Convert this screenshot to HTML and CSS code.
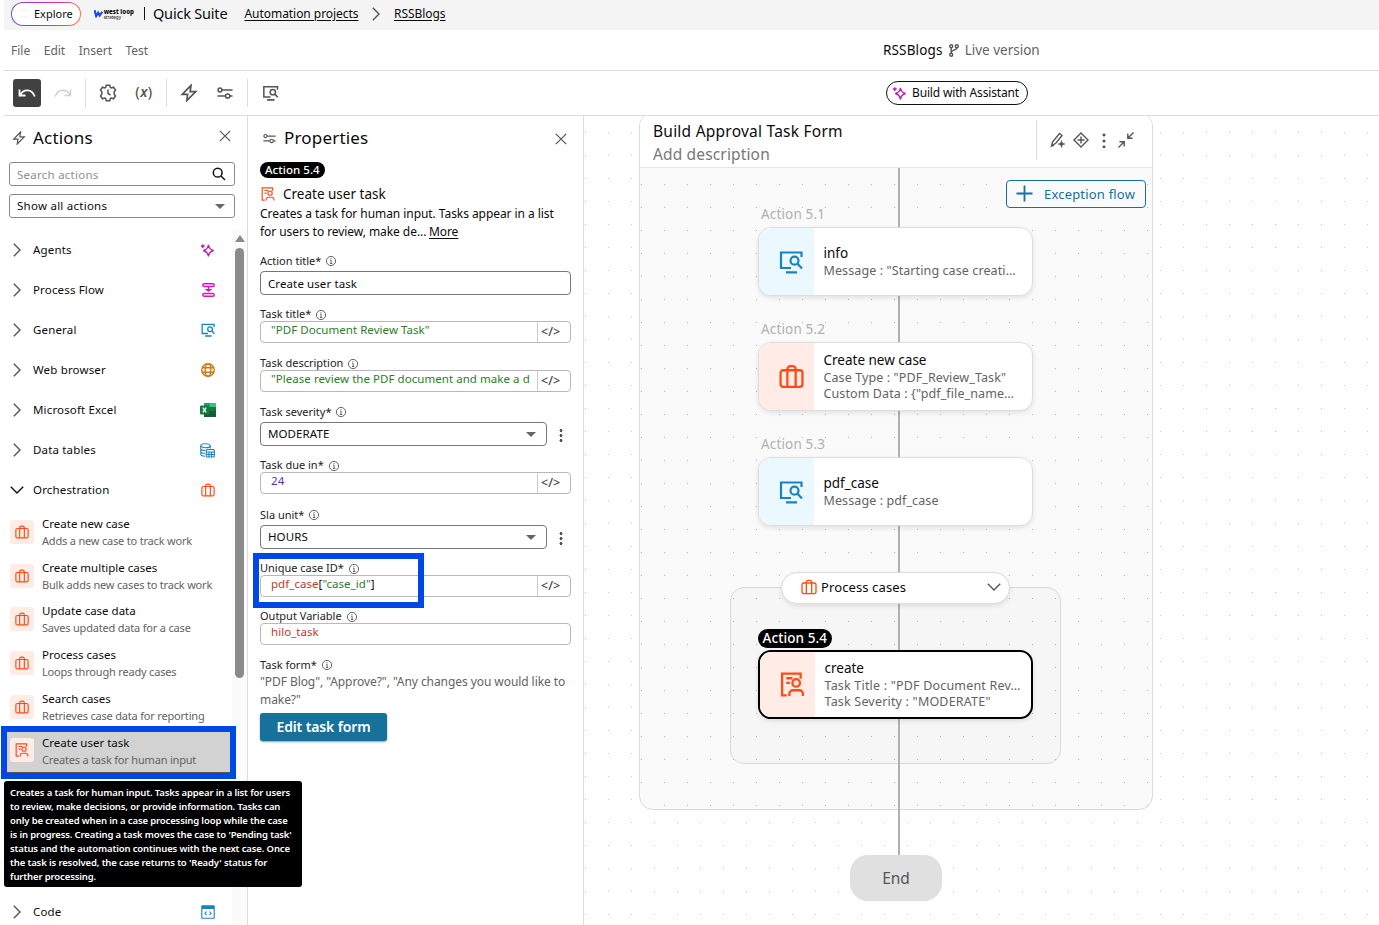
FILE: index.html
```html
<!DOCTYPE html>
<html lang="en">
<head>
<meta charset="UTF-8">
<title>RSSBlogs – Quick Suite</title>
<meta name="viewport" content="width=device-width,initial-scale=1">
<link rel="stylesheet" href="styles.css">
</head>
<body>
<svg class="sprite" width="0" height="0" aria-hidden="true">
  <defs>
    <linearGradient id="magic" x1="1" y1="0" x2="0" y2="1"><stop offset="0" stop-color="#f0109a"/><stop offset=".5" stop-color="#c414b8"/><stop offset="1" stop-color="#5a1a9c"/></linearGradient>
  </defs>
  <symbol id="i-monitor" viewBox="0 0 24 24"><path d="M22.500 7V2.500H2v15.500h10M7 22.300h11"/><circle cx="15.500" cy="10.700" r="4"/><path d="M18.500 13.700l4.500 4.800"/></symbol>
  <symbol id="i-case" viewBox="0 0 24 24"><rect x="1.500" y="6" width="21" height="16" rx="2.500"/><path d="M8 22V5a3 3 0 0 1 3-3h2a3 3 0 0 1 3 3v17"/></symbol>
  <symbol id="i-task" viewBox="0 0 24 24"><path d="M19.800 6.500V1.500H2V22.500H6.500M6 6h6M6 10.500h3.500"/><circle cx="15.500" cy="10.500" r="3.600"/><path d="M9 23v-2a3.500 3.500 0 0 1 3.500-3.500h6a3.500 3.500 0 0 1 3.500 3.500v2"/></symbol>
  <symbol id="i-bolt" viewBox="0 0 16 16"><path d="M9.800 1.200L2 9.200h4.800L6 14.800 14 6.800H9z"/></symbol>
  <symbol id="i-sliders" viewBox="0 0 16 16"><circle cx="3" cy="5" r="1.900"/><path d="M5 5h10.500M.5 11h8M13 11h2.500"/><circle cx="10.700" cy="11" r="2.100"/></symbol>
  <symbol id="i-close" viewBox="0 0 12 12"><path d="M.8.8l10.400 10.400M11.200.8L.8 11.200"/></symbol>
  <symbol id="i-right" viewBox="0 0 8 14"><path d="M.8.800L7 7 .8 13.200"/></symbol>
  <symbol id="i-down" viewBox="0 0 14 8"><path d="M.800.8L7 7 13.200.8"/></symbol>
  <symbol id="i-info" viewBox="0 0 12 12"><circle cx="6" cy="6" r="4.600"/><path d="M5.200 5.200h.9v3.200M4.900 8.500h2.400M6 3.200v1"/></symbol>
  <symbol id="i-spark" viewBox="0 0 16 16"><path d="M9 2c.6 3.700 1.900 5.200 5.500 6-3.600.9-4.900 2.400-5.500 6.200C8.400 10.400 7.100 8.900 3.500 8 7.100 7.200 8.400 5.700 9 2zM3 1.200v4M1 3.200h4"/></symbol>
</svg>

<header class="topbar">
  <div class="explore"><span class="burger"></span>Explore</div>
  <div class="logo">
    <svg width="9" height="9" viewBox="0 0 10 10"><path d="M.5 1l2 7 2.300-4 1.700 3.300L9.500 3" fill="none" stroke="#1646f0" stroke-width="2.400"/></svg>
    <div class="logo-text"><b>west loop</b><span>strategy</span></div>
  </div>
  <span class="bar"></span>
  <span class="suite">Quick Suite</span>
  <nav class="crumbs"><a>Automation projects</a><svg class="ico" width="8" height="14"><use href="#i-right"/></svg><a>RSSBlogs</a></nav>
</header>

<div class="menubar">
  <span>File</span><span>Edit</span><span>Insert</span><span>Test</span>
  <div class="doc">
    <b>RSSBlogs</b>
    <svg class="ico" width="10" height="13" viewBox="0 0 10 13"><circle cx="2.200" cy="2.200" r="1.500"/><circle cx="7.800" cy="2.200" r="1.500"/><circle cx="2.200" cy="10.800" r="1.500"/><path d="M2.200 3.800v5.400M7.800 3.800c0 3-5.400 1.700-5.600 4.400"/></svg>
    <em>Live version</em>
  </div>
</div>

<div class="toolbar">
  <button class="tool tool-on"><svg class="ico" width="18" height="12" viewBox="0 0 18 12"><path d="M1.500 2.500v6h6M2 8C5 2.500 13.500.5 16.800 9.500"/></svg></button>
  <button class="tool tool-off"><svg class="ico" width="18" height="12" viewBox="0 0 18 12"><path d="M16.500 2.500v6h-6M16 8C13 2.500 4.500.5 1.200 9.500"/></svg></button>
  <i></i>
  <button class="tool"><svg class="ico" width="18" height="18" viewBox="0 0 18 18"><path d="M7.200 1.200h3.600l.5 2.200 1.200.6 2-.8 2 2.800-1.300 1.800v2.400l1.300 1.800-2 2.800-2-.8-1.200.6-.5 2.200H7.200l-.5-2.200-1.200-.6-2 .8-2-2.800 1.300-1.800V7.800L1.500 6l2-2.800 2 .8 1.200-.6z"/><path d="M9 5.500V9.500l2.500 1.500"/></svg></button>
  <button class="tool fx">(<em>x</em>)</button>
  <i></i>
  <button class="tool"><svg class="ico" width="18" height="18"><use href="#i-bolt"/></svg></button>
  <button class="tool"><svg class="ico" width="16" height="16"><use href="#i-sliders"/></svg></button>
  <i></i>
  <button class="tool"><svg class="ico mon" width="17" height="16"><use href="#i-monitor"/></svg></button>
  <button class="assistant"><svg class="ico magic" width="15" height="15"><use href="#i-spark"/></svg>Build with Assistant</button>
</div>

<main class="workspace">
  <aside class="actions">
    <h2><svg class="ico" width="14" height="14"><use href="#i-bolt"/></svg><span>Actions</span><svg class="ico close" width="12" height="12"><use href="#i-close"/></svg></h2>
    <div class="search"><span>Search actions</span><svg width="14" height="14" viewBox="0 0 14 14" fill="none" stroke="#111" stroke-width="1.500"><circle cx="5.700" cy="5.700" r="4.400"/><path d="M9 9l4 4"/></svg></div>
    <div class="select"><span>Show all actions</span><b class="caret"></b></div>
    <div class="tree">
      <div class="cat"><svg class="ico" width="8" height="14"><use href="#i-right"/></svg><span>Agents</span><svg class="ico magic" width="15" height="15"><use href="#i-spark"/></svg></div>
      <div class="cat"><svg class="ico" width="8" height="14"><use href="#i-right"/></svg><span>Process Flow</span><svg class="ico pink" width="13" height="14" viewBox="0 0 13 14"><rect x=".800" y=".800" width="11.400" height="2.700" rx="1.300"/><rect x=".800" y="10.500" width="11.400" height="2.700" rx="1.300"/><path d="M6.500 4v4M4.700 6.800l1.800 1.400 1.800-1.400z"/></svg></div>
      <div class="cat"><svg class="ico" width="8" height="14"><use href="#i-right"/></svg><span>General</span><svg class="ico blue mon" width="14" height="14"><use href="#i-monitor"/></svg></div>
      <div class="cat"><svg class="ico" width="8" height="14"><use href="#i-right"/></svg><span>Web browser</span><svg class="ico amber" width="14" height="14" viewBox="0 0 14 14"><circle cx="7" cy="7" r="6.200"/><ellipse cx="7" cy="7" rx="2.800" ry="6.200"/><path d="M1.300 4.800h11.400M1.300 9.200h11.400"/></svg></div>
      <div class="cat"><svg class="ico" width="8" height="14"><use href="#i-right"/></svg><span>Microsoft Excel</span><svg class="excel" width="16" height="16" viewBox="0 0 16 16"><path fill="#21a366" d="M4 1h12v7H4z"/><path fill="#33c481" d="M10 1h6v4h-6z"/><path fill="#107c41" d="M10 5h6v5h-6zM4 5h6v5H4z"/><path fill="#185c37" d="M4 9h12v6H4z"/><rect x="0" y="3.500" width="9" height="9" rx="1" fill="#107c41"/><path d="M2.800 5.700l3.400 4.600M6.200 5.700L2.800 10.300" stroke="#fff" stroke-width="1.300"/></svg></div>
      <div class="cat"><svg class="ico" width="8" height="14"><use href="#i-right"/></svg><span>Data tables</span><svg class="ico blue" width="15" height="15" viewBox="0 0 15 15"><ellipse cx="5.500" cy="2.700" rx="4.700" ry="2"/><path d="M.800 2.700v8.600c0 1 2 1.900 4.200 1.900M10.200 2.700v2.800M.8 5.500c0 1.200 2 2 4.700 2M.8 8.500c0 1.100 1.800 1.900 4 1.900"/><rect x="6.300" y="6.500" width="8" height="7.500" rx="1"/><path d="M6.300 9h8M9 9v5M11.600 9v5M6.300 11.500h8"/></svg></div>
      <div class="cat open"><svg class="ico" width="14" height="8"><use href="#i-down"/></svg><span>Orchestration</span><svg class="ico orange" width="14" height="14"><use href="#i-case"/></svg></div>
      <div class="act"><div class="tile"><svg class="ico" width="14" height="14"><use href="#i-case"/></svg></div><div><b>Create new case</b><p>Adds a new case to track work</p></div></div>
      <div class="act"><div class="tile"><svg class="ico" width="14" height="14"><use href="#i-case"/></svg></div><div><b>Create multiple cases</b><p>Bulk adds new cases to track work</p></div></div>
      <div class="act"><div class="tile"><svg class="ico" width="14" height="14"><use href="#i-case"/></svg></div><div><b>Update case data</b><p>Saves updated data for a case</p></div></div>
      <div class="act"><div class="tile"><svg class="ico" width="14" height="14"><use href="#i-case"/></svg></div><div><b>Process cases</b><p>Loops through ready cases</p></div></div>
      <div class="act"><div class="tile"><svg class="ico" width="14" height="14"><use href="#i-case"/></svg></div><div><b>Search cases</b><p>Retrieves case data for reporting</p></div></div>
      <div class="act selected"><div class="tile"><svg class="ico" width="14" height="14"><use href="#i-task"/></svg></div><div><b>Create user task</b><p>Creates a task for human input</p></div>
        <div class="tip">Creates a task for human input. Tasks appear in a list for users<br>to review, make decisions, or provide information. Tasks can<br>only be created when in a case processing loop while the case<br>is in progress. Creating a task moves the case to 'Pending task'<br>status and the automation continues with the next case. Once<br>the task is resolved, the case returns to 'Ready' status for<br>further processing.</div>
      </div>
      <div class="cat last"><svg class="ico" width="8" height="14"><use href="#i-right"/></svg><span>Code</span><svg class="ico blue" width="14" height="14" viewBox="0 0 14 14"><rect x=".800" y=".800" width="12.400" height="12.400" rx=".5"/><path d="M1 2.500h12" stroke-width="3"/><path d="M5.500 6.500L4 8.300l1.500 1.800M8.500 6.500L10 8.300l-1.500 1.800"/></svg></div>
      <div class="scroll"><i></i><b></b></div>
    </div>
  </aside>

  <section class="props">
    <h2><svg class="ico" width="13" height="13"><use href="#i-sliders"/></svg><span>Properties</span><svg class="ico close" width="12" height="12"><use href="#i-close"/></svg></h2>
    <span class="badge">Action 5.4</span>
    <div class="kind"><svg class="ico" width="14" height="14"><use href="#i-task"/></svg>Create user task</div>
    <p class="about">Creates a task for human input. Tasks appear in a list<br>for users to review, make de... <u>More</u></p>

    <div class="field"><label>Action title*<svg class="ico" width="12" height="12"><use href="#i-info"/></svg></label><div class="box">Create user task</div></div>
    <div class="field code"><label>Task title*<svg class="ico" width="12" height="12"><use href="#i-info"/></svg></label><div class="box"><span class="str">"PDF Document Review Task"</span><i>&lt;/&gt;</i></div></div>
    <div class="field code more"><label>Task description<svg class="ico" width="12" height="12"><use href="#i-info"/></svg></label><div class="box"><span class="str">"Please review the PDF document and make a d</span><i>&lt;/&gt;</i></div></div>
    <div class="field pick"><label>Task severity*<svg class="ico" width="12" height="12"><use href="#i-info"/></svg></label><div class="box">MODERATE<b class="caret"></b></div><b class="dots"></b></div>
    <div class="field code"><label>Task due in*<svg class="ico" width="12" height="12"><use href="#i-info"/></svg></label><div class="box"><span class="num">24</span><i>&lt;/&gt;</i></div></div>
    <div class="field pick more"><label>Sla unit*<svg class="ico" width="12" height="12"><use href="#i-info"/></svg></label><div class="box">HOURS<b class="caret"></b></div><b class="dots"></b></div>
    <div class="field code marked"><label>Unique case ID*<svg class="ico" width="12" height="12"><use href="#i-info"/></svg></label><div class="box"><span><em class="var">pdf_case</em>[<em class="str">"case_id"</em>]</span><i>&lt;/&gt;</i></div></div>
    <div class="field code"><label>Output Variable<svg class="ico" width="12" height="12"><use href="#i-info"/></svg></label><div class="box"><span class="var">hilo_task</span></div></div>
    <div class="field form"><label>Task form*<svg class="ico" width="12" height="12"><use href="#i-info"/></svg></label><p>"PDF Blog", "Approve?", "Any changes you would like to<br>make?"</p></div>
    <button class="edit">Edit task form</button>
  </section>

  <section class="canvas">
    <div class="group">
      <div class="group-head">
        <div class="group-title"><b>Build Approval Task Form</b><span>Add description</span></div>
        <div class="group-tools">
          <svg class="ico" width="16" height="16" viewBox="0 0 16 16"><path d="M1.500 14l1-4L9.500 1.500l2.500 2L6 11zM1.500 14l2.500-1"/><path d="M11.500 8.500l.9 2.600 2.600.9-2.600.9-.9 2.600-.9-2.600-2.600-.9 2.600-.9z" fill="#555" stroke-width=".5"/></svg>
          <svg class="ico" width="16" height="16" viewBox="0 0 16 16"><path d="M8 1L15 8 8 15 1 8zM8 4.500v7M4.500 8h7"/></svg>
          <b class="dots"></b>
          <svg class="ico" width="16" height="16" viewBox="0 0 16 16"><path d="M15.500.5L10 6M9.800 1.500v4.700h4.700M.5 15.500L6 10M1.500 9.800h4.700v4.700"/></svg>
        </div>
      </div>
    </div>
    <div class="loop"></div>
    <div class="wire"></div>
    <button class="exception"><svg width="17" height="17" viewBox="0 0 17 17"><path d="M8.500.5v16M.5 8.500h16" stroke="#17719a" stroke-width="1.800"/></svg>Exception flow</button>

    <span class="step s1">Action 5.1</span>
    <div class="node n1 sky"><div class="glyph"><svg class="ico" width="24" height="24"><use href="#i-monitor"/></svg></div><div class="text"><b>info</b><p>Message : "Starting case creati…</p></div></div>
    <span class="step s2">Action 5.2</span>
    <div class="node n2"><div class="glyph"><svg class="ico" width="25" height="25"><use href="#i-case"/></svg></div><div class="text"><b>Create new case</b><p>Case Type : "PDF_Review_Task"</p><p>Custom Data : {"pdf_file_name…</p></div></div>
    <span class="step s3">Action 5.3</span>
    <div class="node n3 sky"><div class="glyph"><svg class="ico" width="24" height="24"><use href="#i-monitor"/></svg></div><div class="text"><b>pdf_case</b><p>Message : pdf_case</p></div></div>
    <div class="loop-head"><svg class="ico orange" width="16" height="16"><use href="#i-case"/></svg><span>Process cases</span><svg class="ico" width="14" height="8"><use href="#i-down"/></svg></div>
    <span class="badge s4">Action 5.4</span>
    <div class="node n4 current"><div class="glyph"><svg class="ico" width="25" height="25"><use href="#i-task"/></svg></div><div class="text"><b>create</b><p>Task Title : "PDF Document Rev…</p><p>Task Severity : "MODERATE"</p></div></div>
    <div class="end">End</div>
  </section>
</main>
</body>
</html>
```
FILE: styles.css
```css
:root {
  --font:"Noto Sans","Open Sans",sans-serif;
  --line:#dcdcdc;
  --muted:#636363;
  --orange:#ff4b14;
  --peach:#ffece6;
  --blue:#1683c4;
  --teal:#17719a;
  --mark:#0047e8;
}
*,*::after{box-sizing:border-box;}
body{margin:0;padding-left:4px;height:925px;overflow:hidden;background:#fff;font:12px/18px var(--font);color:#0b0b0b;position:relative;}
p,h2{margin:0;font-weight:400;}
b,em{font-weight:400;font-style:normal;}
button{font:inherit;border:0;background:none;padding:0;color:inherit;}
.sprite{position:absolute;}
.ico{display:block;flex:none;fill:none;stroke:#555;stroke-width:1.4;}
.magic{stroke:url(#magic);}
.pink{stroke:#d915b4;}
.blue{stroke:var(--blue);stroke-width:1.1;}
.amber{stroke:#cf7911;}
.orange{stroke:var(--orange);stroke-width:2;}
.mon{stroke-width:2.2;}

/* header */
.topbar{height:30px;background:#f4f4f4;display:flex;align-items:center;padding:0 0 3px 7px;}
.explore{width:70px;height:24px;border:1.5px solid transparent;border-radius:12px;background:linear-gradient(#fff,#fff) padding-box,linear-gradient(100deg,#6a4fe0,#c02ad0 45%,#e8389a 70%,#ff7a3c) border-box;font-size:11px;line-height:21px;padding-left:8px;display:flex;align-items:center;gap:6px;}
.burger{width:8px;height:7px;border:solid #f4f4f4;border-width:1px 0;}
.logo{display:flex;align-items:center;gap:1px;margin-left:13px;width:40px;}
.logo-text{font-size:6.200px;letter-spacing:0;}
.logo-text b{display:block;font-weight:800;line-height:6px;white-space:nowrap;}
.logo-text span{display:block;font-size:4.500px;line-height:4px;}
.bar{width:1px;height:13px;background:#111;margin:0 8px 0 10px;}
.suite{font-size:14.500px;letter-spacing:-.2px;width:91.500px;position:relative;top:-1px;}
.crumbs{display:flex;align-items:center;letter-spacing:-.05px;}
.crumbs a{text-decoration:underline;text-underline-offset:2px;}
.crumbs a:first-child{width:127px;}
.crumbs svg{margin-right:14.500px;}
.menubar{height:41px;border-bottom:1px solid var(--line);display:flex;align-items:center;gap:13.500px;padding:2px 0 0 7px;color:var(--muted);position:relative;}
.doc{position:absolute;left:879px;top:11px;display:flex;align-items:center;gap:6px;font-size:13.500px;}
.doc b{color:#0b0b0b;letter-spacing:.15px;}
.toolbar{height:45px;border-bottom:1px solid var(--line);display:flex;align-items:center;padding-left:9px;position:relative;}
.tool{width:28px;height:28px;margin-right:8px;display:flex;align-items:center;justify-content:center;border-radius:3px;}
.tool .ico{stroke-width:1.5;}
.tool .mon{stroke-width:2.3;}
.tool-on{background:#414141;}
.tool-on .ico{stroke:#fff;stroke-width:1.8;}
.tool-off .ico{stroke:#d0d0d0;}
.toolbar i{width:1px;height:28px;background:var(--line);margin-right:8px;}
.fx{font-size:14px;font-weight:500;color:#555;padding-bottom:2px;letter-spacing:.5px;}
.fx em{font-style:italic;font-weight:600;}
.assistant{position:absolute;left:882px;top:10px;width:142px;height:24px;border:1.300px solid #111;border-radius:12px;display:flex;align-items:center;gap:5px;padding-left:5px;white-space:nowrap;letter-spacing:-.16px;}

.workspace{display:flex;height:809px;}
h2{display:flex;align-items:center;font-size:17px;height:44px;letter-spacing:.18px;}
.close{margin-left:auto;stroke-width:1.2;}
.caret{border:5px solid transparent;border-top-color:#666;border-bottom:0;}
.dots{width:4px;height:14px;background:radial-gradient(circle,#555 1.200px,transparent 1.800px) 0 0/4px 5px;}

/* actions panel */
.actions{width:244px;border-right:1px solid var(--line);position:relative;}
.actions h2{padding:0 16px 0 8px;}
.actions h2 span{margin-left:7px;}
.actions .close{position:relative;top:-2px;}
.search,.select{width:226px;height:24px;margin:2px 0 0 5px;border:1px solid #8a8a8a;border-radius:3px;padding:0 9px 0 7px;display:flex;align-items:center;justify-content:space-between;font-size:11.500px;letter-spacing:.25px;}
.search{color:#8f8f8f;padding:0 8px 0 7px;}
.search span{position:relative;top:1px;}
.select{margin-top:8px;}
.tree{margin-top:12px;position:relative;height:695px;}
.cat{height:40px;display:flex;align-items:center;padding:0 17px 0 8.500px;width:228px;font-size:11.500px;letter-spacing:.16px;}
.cat span{margin-left:12.500px;flex:1;}
.cat .excel{margin-right:-1px;}
.cat.open{padding-left:6px;}
.cat.open span{margin-left:9px;}
.cat.open .ico:first-child{stroke:#111;}
.cat.last{margin-top:118.500px;}
.act{height:43.700px;display:flex;align-items:center;padding-left:6px;gap:8px;font-size:11.500px;line-height:17px;position:relative;}
.act b{display:block;}
.act p{color:var(--muted);font-size:11px;letter-spacing:-.19px;}
.act .tile{width:24px;height:24px;border-radius:3px;background:var(--peach);display:flex;align-items:center;justify-content:center;}
.tile .ico{stroke:var(--orange);stroke-width:2;}
.act.selected{width:223px;height:41px;margin:4px 0 0 3px;padding:0 0 2px 3px;background:#d2d2d2;border-bottom:1px solid #555;outline:6px solid var(--mark);z-index:2;}
.selected .tile{position:relative;top:-1px;}
.tip{position:absolute;left:-3px;top:49px;width:298px;height:106px;background:#000;color:#fff;border-radius:3px;padding:5px 6px;font-size:9.500px;line-height:14px;font-weight:600;letter-spacing:-.13px;white-space:nowrap;z-index:3;}
.scroll{position:absolute;right:0;top:0;width:15px;height:695px;background:#fbfbfb;}
.scroll i{position:absolute;left:2.500px;top:5px;border:5px solid transparent;border-bottom:7px solid #8b8b8b;border-top:0;}
.scroll b{position:absolute;left:3px;top:18px;width:9px;height:430px;border-radius:5px;background:#8b8b8b;}

/* properties panel */
.props{width:336px;border-right:1px solid var(--line);padding:0 12px;display:flex;flex-direction:column;align-items:flex-start;}
.props h2{width:100%;height:46px;padding:0 4px 2px 3px;}
.props h2 span{margin-left:8px;}
.props .close{position:relative;top:1px;}
.badge{height:16px;line-height:15px;border-radius:8px;background:#000;color:#fff;padding:0 5px;font-weight:500;font-size:11.500px;letter-spacing:.05px;}
.kind{display:flex;align-items:center;height:20px;margin-top:6px;padding-left:1px;gap:8px;font-size:13.500px;}
.kind .ico{stroke:var(--orange);stroke-width:2;}
.about{margin-top:1px;white-space:nowrap;letter-spacing:-.06px;}
.about u{text-underline-offset:2px;margin-left:-.5px;}
.field{width:311px;margin-top:10px;position:relative;}
.field label{height:20px;display:flex;align-items:center;gap:4px;font-size:11px;color:#222;}
.field label .ico{stroke-width:.9;}
.field .box{height:24px;border:1px solid #777;border-radius:4px;padding:1px 7px 0;display:flex;align-items:center;font-size:11.500px;letter-spacing:.1px;white-space:nowrap;}
.field.code{margin-top:14px;}
.code label{height:12px;padding-bottom:2px;}
.code label .ico{position:relative;top:1px;}
.field.code .box{height:22px;border-color:#b8b8b8;padding:0 0 0 10px;letter-spacing:.05px;}
.code .box span{position:relative;top:-2px;}
.code .box i{margin-left:auto;width:33px;height:20px;border-left:1px solid #ccc;font-style:normal;font-weight:500;padding-left:3px;color:#444;line-height:20px;font-size:12.500px;}
.field.code.more{margin-top:15px;}
.field.pick.more{margin-top:11px;}
.field.pick .box{width:287px;padding:0 10px 0 7px;}
.pick .caret{margin-left:auto;}
.pick .dots{position:absolute;right:8px;bottom:4px;}
.str{color:#2b7d1f;}
.num{color:#4a32c0;}
.var{color:#bf3a1e;}
.marked::after{content:"";position:absolute;left:-7px;top:-10px;width:171px;height:55px;border:6px solid var(--mark);}
.form p{color:var(--muted);white-space:nowrap;margin-top:-2px;letter-spacing:-.07px;}
.edit{width:127px;height:28px;margin-top:4px;background:var(--teal);color:#fff;border-radius:3px;font-size:14px;font-weight:600;letter-spacing:-.13px;box-shadow:0 1px 2px rgba(0,0,0,.4);}

/* flow canvas */
.canvas{flex:1;position:relative;overflow:hidden;background:radial-gradient(circle,#c4c4c4 .700px,transparent .900px) -10px 5px/23px 23px #fff;}
.group{position:absolute;left:55px;top:-4px;width:514px;height:698px;border:1px solid #d9d9d9;border-radius:14px;overflow:hidden;background:radial-gradient(circle,#b4b4b4 .700px,transparent .900px) -10px 14px/23px 23px #fafafa;}
.group-head{height:55px;background:#fff;border-bottom:1px solid #e4e4e4;padding:6.500px 0 0 13px;display:flex;justify-content:space-between;font-size:15.500px;letter-spacing:.24px;}
.group-title b,.group-title span{display:block;line-height:23px;}
.group-title span{color:#777;letter-spacing:.15px;}
.group-tools{width:116px;height:40px;margin-top:.5px;border-left:1px solid var(--line);padding-left:12.500px;display:flex;align-items:center;gap:7.500px;}
.group-tools .dots{margin:0 5px;width:4px;height:16px;background-size:4px 6px;}
.loop{position:absolute;left:146px;top:471px;width:331px;height:177px;border:1px solid #d9d9d9;border-radius:14px;background:rgba(0,0,0,.016);}
.wire{position:absolute;left:314px;top:52px;width:2px;height:690px;background:#b0b0b0;}
.exception{position:absolute;left:422px;top:64px;width:140px;height:28px;border:1.300px solid var(--teal);border-radius:4px;background:#fafafa;color:var(--teal);font-size:13px;letter-spacing:.19px;display:flex;align-items:center;gap:11px;padding:0 0 1px 9px;white-space:nowrap;}
.step{position:absolute;left:177px;color:#b0b0b0;font-size:13.500px;letter-spacing:.15px;}
.s1{top:89px;}
.s2{top:204px;}
.s3{top:319px;}
.node{position:absolute;left:174px;width:275px;height:69px;border:1px solid #dedede;border-radius:13px;background:#fff;box-shadow:0 2px 5px rgba(0,0,0,.1);display:flex;overflow:hidden;white-space:nowrap;}
.glyph{width:55px;background:var(--peach);display:flex;align-items:center;justify-content:center;padding-left:9px;}
.glyph .ico{stroke:var(--orange);stroke-width:2.2;}
.sky .glyph{background:#ecf8ff;}
.sky .glyph .ico{stroke:var(--blue);stroke-width:2.2;}
.text{padding-left:9.500px;display:flex;flex-direction:column;justify-content:center;line-height:16px;color:var(--muted);font-size:12.500px;letter-spacing:.1px;}
.text b{color:#0b0b0b;font-size:13.500px;line-height:18px;letter-spacing:0;position:relative;top:-1px;}
.n1{top:111px;}
.n2{top:226px;}
.n3{top:341px;}
.n4{top:534px;}
.node.current{border:2px solid #000;}
.current .text{letter-spacing:.19px;}
.loop-head{position:absolute;left:197px;top:455.500px;width:229px;height:32px;border:1px solid #dedede;border-radius:16px;background:#fff;box-shadow:0 2px 5px rgba(0,0,0,.1);display:flex;align-items:center;padding:0 8px 1px 19px;font-size:13px;letter-spacing:.11px;}
.loop-head span{margin-left:4px;flex:1;}
.badge.s4{position:absolute;left:174px;top:513px;height:19px;line-height:18px;border-radius:10px;padding:0 4.500px;font-size:13.500px;letter-spacing:.1px;}
.end{position:absolute;left:266px;top:739px;width:92px;height:46px;border-radius:18px;background:#e0e0e0;color:#555;font-size:15.500px;letter-spacing:0;line-height:46px;text-align:center;}
```
